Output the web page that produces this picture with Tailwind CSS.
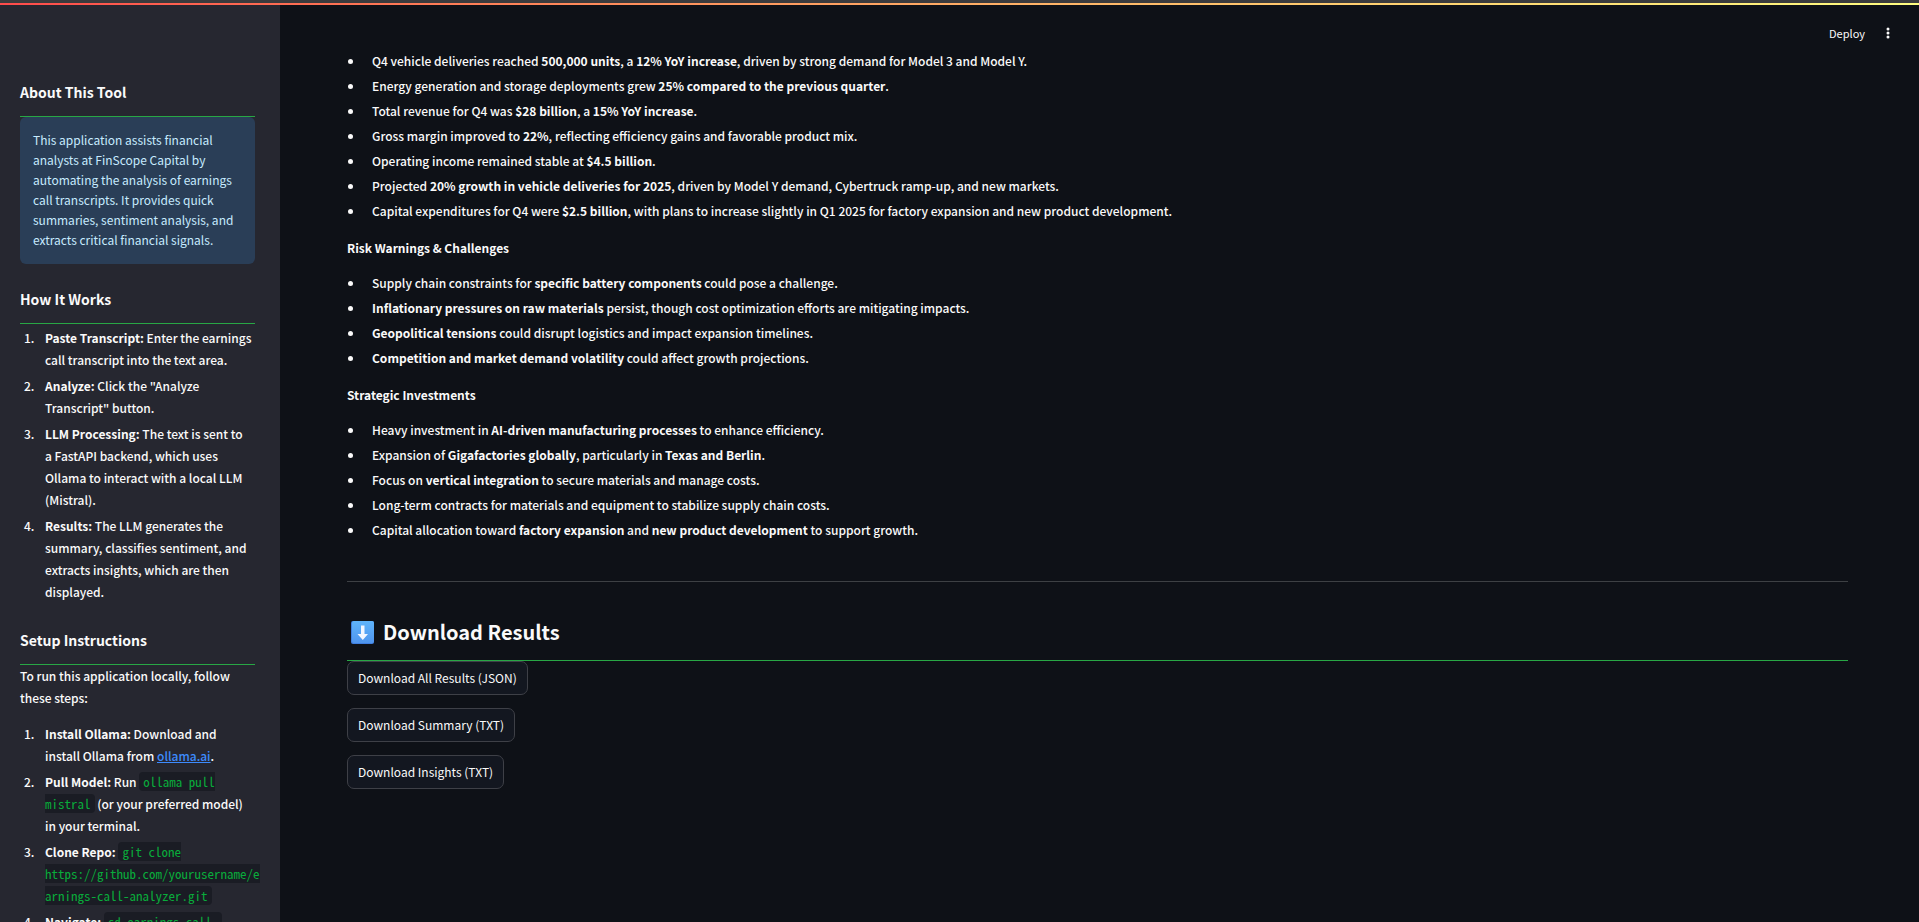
<!DOCTYPE html>
<html lang="en">
<head>
<meta charset="utf-8">
<title>Earnings Call Analyzer</title>
<script src="https://cdn.jsdelivr.net/npm/@tailwindcss/browser@4"></script>
</head>
<body class="flex h-screen flex-col overflow-hidden bg-[#0e1117] font-['Noto_Sans_CJK_SC','Noto_Sans',sans-serif] text-[12px] leading-[22px] font-medium text-[#fafafa]">
<div class="h-[3px] shrink-0 bg-[#3b3b3d]"></div>
<div class="h-[2px] shrink-0 bg-linear-to-r from-[#ff4b4b] to-[#fffd80]"></div>
<div class="flex min-h-0 flex-1">
  <aside class="w-[280px] shrink-0 overflow-hidden bg-[#262730] pt-[76px] pr-[25px] pl-5">
    <h3 class="border-b border-[#28a745] pb-[13px] text-[14px] font-bold">About This Tool</h3>
    <div class="rounded-md bg-[#2a3e57] px-[13px] pt-[13px] pb-[14px] leading-5 font-normal text-[#c7ebff]">This application assists financial<br>analysts at FinScope Capital by<br>automating the analysis of earnings<br>call transcripts. It provides quick<br>summaries, sentiment analysis, and<br>extracts critical financial signals.</div>
    <h3 class="mt-6 border-b border-[#28a745] pb-[13px] text-[14px] font-bold">How It Works</h3>
    <ol class="mt-[3px] flex list-decimal flex-col gap-1 pl-[17px] whitespace-nowrap [&>li]:pl-2">
      <li><strong>Paste Transcript:</strong> Enter the earnings<br>call transcript into the text area.</li>
      <li><strong>Analyze:</strong> Click the "Analyze<br>Transcript" button.</li>
      <li><strong>LLM Processing:</strong> The text is sent to<br>a FastAPI backend, which uses<br>Ollama to interact with a local LLM<br>(Mistral).</li>
      <li><strong>Results:</strong> The LLM generates the<br>summary, classifies sentiment, and<br>extracts insights, which are then<br>displayed.</li>
    </ol>
    <h3 class="mt-[26px] border-b border-[#28a745] pb-[13px] text-[14px] font-bold">Setup Instructions</h3>
    <p>To run this application locally, follow<br>these steps:</p>
    <ol class="mt-[14px] flex list-decimal flex-col gap-1 pl-[17px] whitespace-nowrap [&>li]:pl-2">
      <li><strong>Install Ollama:</strong> Download and<br>install Ollama from <a href="https://ollama.ai" class="text-[#3d8bfd] underline">ollama.ai</a>.</li>
      <li><strong>Pull Model:</strong> Run <code class="rounded bg-[#1a1c24] px-1 font-['Noto_Sans_Mono_CJK_SC','DejaVu_Sans_Mono',monospace] text-[13px] leading-4 font-normal text-[#09ab3b]">ollama pull <br>mistral</code> (or your preferred model)<br>in your terminal.</li>
      <li><strong>Clone Repo:</strong> <code class="rounded bg-[#1a1c24] px-1 font-['Noto_Sans_Mono_CJK_SC','DejaVu_Sans_Mono',monospace] text-[13px] leading-4 font-normal text-[#09ab3b]">git clone <br>https://github.com/yourusername/e<br>arnings-call-analyzer.git</code></li>
      <li><strong>Navigate:</strong> <code class="rounded bg-[#1a1c24] px-1 font-['Noto_Sans_Mono_CJK_SC','DejaVu_Sans_Mono',monospace] text-[13px] leading-4 font-normal text-[#09ab3b]">cd earnings-call-</code></li>
    </ol>
  </aside>
  <main class="relative min-w-0 flex-1 overflow-hidden pt-[45px] pr-[71px] pl-[67px]">
    <header class="absolute top-[17px] right-[26px] flex items-center gap-[18px]">
      <button type="button" class="text-[11px] leading-[22px] font-normal">Deploy</button>
      <button type="button" aria-label="Main menu"><svg class="h-3 w-[10px]" viewBox="0 0 10 12" fill="#fafafa"><circle cx="5" cy="2" r="1.500"/><circle cx="5" cy="6" r="1.500"/><circle cx="5" cy="10" r="1.500"/></svg></button>
    </header>
    <ul class="flex list-disc flex-col gap-[3px] pl-[17px] [&>li]:pl-2">
      <li>Q4 vehicle deliveries reached <strong>500,000 units</strong>, a <strong>12% YoY increase</strong>, driven by strong demand for Model 3 and Model Y.</li>
      <li>Energy generation and storage deployments grew <strong>25% compared to the previous quarter</strong>.</li>
      <li>Total revenue for Q4 was <strong>$28 billion</strong>, a <strong>15% YoY increase</strong>.</li>
      <li>Gross margin improved to <strong>22%</strong>, reflecting efficiency gains and favorable product mix.</li>
      <li>Operating income remained stable at <strong>$4.5 billion</strong>.</li>
      <li>Projected <strong>20% growth in vehicle deliveries for 2025</strong>, driven by Model Y demand, Cybertruck ramp-up, and new markets.</li>
      <li>Capital expenditures for Q4 were <strong>$2.5 billion</strong>, with plans to increase slightly in Q1 2025 for factory expansion and new product development.</li>
    </ul>
    <p class="mt-[15px] font-bold">Risk Warnings &amp; Challenges</p>
    <ul class="mt-[13px] flex list-disc flex-col gap-[3px] pl-[17px] [&>li]:pl-2">
      <li>Supply chain constraints for <strong>specific battery components</strong> could pose a challenge.</li>
      <li><strong>Inflationary pressures on raw materials</strong> persist, though cost optimization efforts are mitigating impacts.</li>
      <li><strong>Geopolitical tensions</strong> could disrupt logistics and impact expansion timelines.</li>
      <li><strong>Competition and market demand volatility</strong> could affect growth projections.</li>
    </ul>
    <p class="mt-[15px] font-bold">Strategic Investments</p>
    <ul class="mt-[13px] flex list-disc flex-col gap-[3px] pl-[17px] [&>li]:pl-2">
      <li>Heavy investment in <strong>AI-driven manufacturing processes</strong> to enhance efficiency.</li>
      <li>Expansion of <strong>Gigafactories globally</strong>, particularly in <strong>Texas and Berlin</strong>.</li>
      <li>Focus on <strong>vertical integration</strong> to secure materials and manage costs.</li>
      <li>Long-term contracts for materials and equipment to stabilize supply chain costs.</li>
      <li>Capital allocation toward <strong>factory expansion</strong> and <strong>new product development</strong> to support growth.</li>
    </ul>
    <hr class="mt-10 border-t border-[#3d4044]">
    <h2 class="mt-[35px] flex items-center gap-[9px] border-b border-[#28a745] pb-[13px] pl-1 text-[20px] leading-[30px] font-bold">
      <svg class="h-[23px] w-[23px]" viewBox="0 0 23 23" aria-hidden="true"><defs><linearGradient id="g" x1="0" y1="0" x2="0" y2="1"><stop offset="0" stop-color="#5fb4fb"/><stop offset="1" stop-color="#4f95ee"/></linearGradient></defs><rect width="23" height="23" rx="2" fill="#3f7fe0"/><rect x="1" y="0" width="22" height="22" rx="2" fill="url(#g)"/><path d="M10 4.500h3.500V13H17l-5.200 6L6.500 13H10z" fill="#f2f6ff"/></svg>
      Download Results
    </h2>
    <div class="flex flex-col items-start gap-[13px]">
      <button type="button" class="h-[34px] rounded-[7px] border border-[#3e4047] bg-[#131720] px-[10px] font-normal">Download All Results (JSON)</button>
      <button type="button" class="h-[34px] rounded-[7px] border border-[#3e4047] bg-[#131720] px-[10px] font-normal">Download Summary (TXT)</button>
      <button type="button" class="h-[34px] rounded-[7px] border border-[#3e4047] bg-[#131720] px-[10px] font-normal">Download Insights (TXT)</button>
    </div>
  </main>
</div>
</body>
</html>
